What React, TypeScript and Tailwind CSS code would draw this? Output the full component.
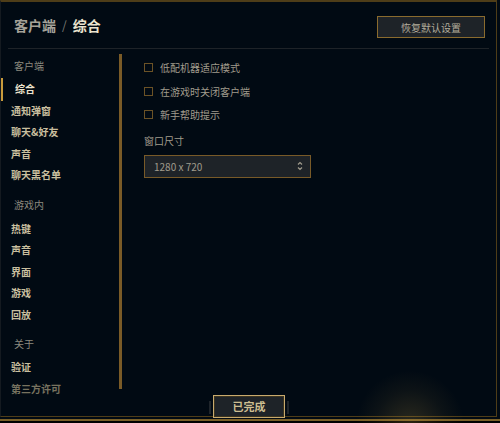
import React, { useState } from "react";

type NavSection = {
  title: string;
  items: string[];
};

const sections: NavSection[] = [
  { title: "客户端", items: ["综合", "通知弹窗", "聊天&好友", "声音", "聊天黑名单"] },
  { title: "游戏内", items: ["热键", "声音", "界面", "游戏", "回放"] },
  { title: "关于", items: ["验证", "第三方许可"] },
];

const options = ["低配机器适应模式", "在游戏时关闭客户端", "新手帮助提示"];

const Sidebar = ({ active }: { active: string }) => {
  return (
    <div className="flex w-[122px] shrink-0">
      <div className="flex-1 pt-[6px]">
        {sections.map((section, i) => (
          <div key={section.title} className={i === 0 ? "" : i === 1 ? "mt-[9px]" : "mt-[8px]"}>
            <div className="flex h-5 items-center pl-[13px] text-[10px] text-[#8c897f]">
              {section.title}
            </div>
            <div className="mt-[3px]">
              {section.items.map((item) => {
                const isActive = section.title === "客户端" && item === active;
                const faded = item === "第三方许可";
                return (
                  <div
                    key={item}
                    className={`relative flex h-[21.5px] items-center text-[10px] font-bold ${
                      isActive
                        ? "pl-[14px] text-[#ece4cf]"
                        : faded
                        ? "pl-[10px] text-[#77725f]"
                        : "pl-[10px] text-[#c9bf9f]"
                    }`}
                  >
                    {isActive && (
                      <span className="absolute left-0 top-0 h-[23px] w-[2px] bg-[#c89b3c]" />
                    )}
                    {item}
                  </div>
                );
              })}
            </div>
          </div>
        ))}
      </div>
      <div className="mt-[5px] h-[335px] w-[3px] mr-[1px] bg-[#7a5b27]" />
    </div>
  );
};

const Checkbox = ({ label }: { label: string }) => {
  const [checked, setChecked] = useState(false);
  return (
    <button
      className="flex h-[23.5px] items-center gap-[7px] text-left"
      onClick={() => setChecked(!checked)}
    >
      <span className="flex h-[9px] w-[9px] items-center justify-center border border-[#6b5226]">
        {checked && <span className="h-[5px] w-[5px] bg-[#c8aa6e]" />}
      </span>
      <span className="text-[10px] text-[#a09b8c]">{label}</span>
    </button>
  );
};

export default function App() {
  return (
    <div className="relative h-[423px] w-[500px] overflow-hidden bg-black font-['Noto_Sans_CJK_SC','Noto_Sans',sans-serif]">
      <div className="h-[421px] w-[500px] border-b-2 border-[#7a6028] bg-[#010a13] pb-[1px]">
        <div className="flex h-[417px] w-[497px] flex-col border-t-2 border-r border-b border-l border-[#4e3d18] border-l-[#141a20]">
          <div className="mx-[7px] flex h-[47px] shrink-0 items-start justify-between border-b border-[#1e2328] pl-[6px] pr-[4px] pt-[13px]">
            <div className="flex h-5 items-center gap-[6px] text-[14px] font-bold">
              <span className="text-[#a5a299]">客户端</span>
              <span className="text-[12px] font-normal text-[#7f7d76]">/</span>
              <span className="text-[#ece4cf]">综合</span>
            </div>
            <button className="mt-[1px] flex h-[22px] w-[108px] items-center justify-center border border-[#8a6b2e] bg-[#1e2328] text-[10px] text-[#b3ad9c]">
              恢复默认设置
            </button>
          </div>

          <div className="flex flex-1 overflow-hidden">
            <Sidebar active="综合" />
            <div className="flex flex-col items-start pl-[21px] pt-[7px]">
              {options.map((o) => (
                <Checkbox key={o} label={o} />
              ))}
              <div className="mt-[4px] flex h-5 items-center text-[10px] text-[#a09b8c]">窗口尺寸</div>
              <div className="mt-[4px] flex h-[23px] w-[167px] items-center justify-between border border-[#785a28] bg-[#1e2328] pl-[9px] pr-[7px]">
                <span className="text-[10px] text-[#a09b8c]">1280 x 720</span>
                <svg width="6" height="10" viewBox="0 0 6 10" fill="none" stroke="#a09b8c" strokeWidth="1.2">
                  <path d="M1 3.5 L3 1.5 L5 3.5" />
                  <path d="M1 6.5 L3 8.5 L5 6.5" />
                </svg>
              </div>
            </div>
          </div>
        </div>
      </div>

      <div className="pointer-events-none absolute left-[355px] top-[370px] h-[70px] w-[110px] bg-[radial-gradient(ellipse_at_50%_80%,rgba(200,160,70,0.22),rgba(200,160,70,0.06)_45%,transparent_70%)]" />

      <div className="absolute left-[209px] top-[395px] flex items-end gap-[2px]">
        <span className="mb-[4px] h-[13px] w-[2px] bg-[#1f252b]" />
        <button className="flex h-[23px] w-[72px] items-center justify-center border border-[#c8aa6e] bg-[#1e2328] text-[11px] font-bold text-[#cdbe91] shadow-[inset_0_0_0_1px_#3a3320]">
          已完成
        </button>
        <span className="mb-[4px] h-[13px] w-[2px] bg-[#1f252b]" />
      </div>
    </div>
  );
}
